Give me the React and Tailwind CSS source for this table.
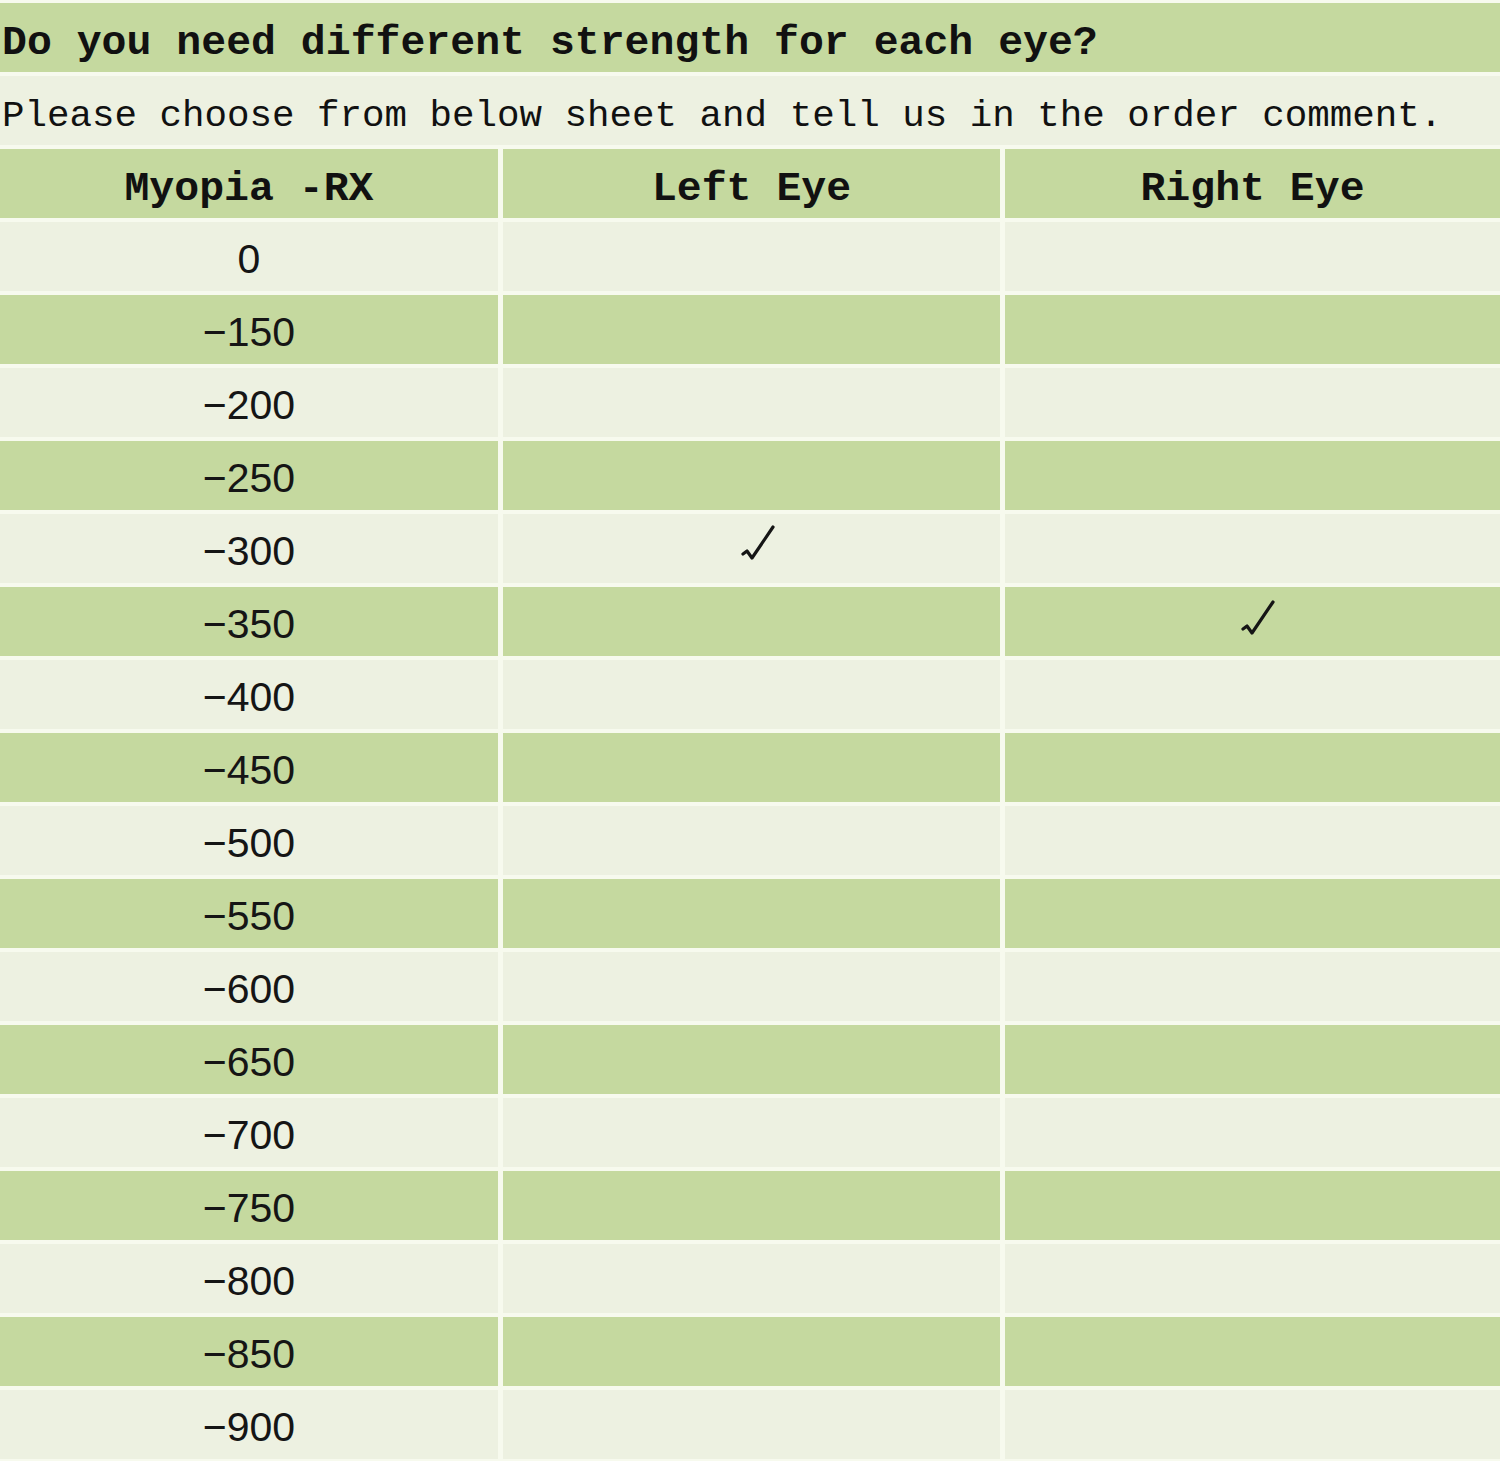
import React from 'react';

const rows = ['0', '−150', '−200', '−250', '−300', '−350', '−400', '−450', '−500', '−550', '−600', '−650', '−700', '−750', '−800', '−850', '−900'];

const GREEN = 'bg-[#c5d99f]';
const LIGHT = 'bg-[#edf1e1]';

const Check = () => (
  <svg width="36" height="40" viewBox="0 0 36 40" className="block">
    <path d="M3 31 L7 28 L12 35 L33 4" fill="none" stroke="#151515" strokeWidth="3.2" strokeLinejoin="round" strokeLinecap="round" />
  </svg>
);

const App = () => {
  return (
    <div className="w-[1500px] h-[1461px] bg-[#f7faee] pt-[3px] overflow-hidden">
      <div className="grid grid-cols-[498px_497px_495px] gap-x-[5px] gap-y-[4px] auto-rows-[69px]">
        <div className={`col-span-3 ${GREEN} flex items-center pl-[2px] pt-[10px]`}>
          <span className="font-['Liberation_Mono',monospace] font-bold text-[41.5px] text-[#111] leading-none">
            Do you need different strength for each eye?
          </span>
        </div>
        <div className={`col-span-3 ${LIGHT} flex items-center pl-[2px] pt-[13px]`}>
          <span className="font-['Liberation_Mono',monospace] text-[37.5px] text-[#111] leading-none">
            Please choose from below sheet and tell us in the order comment.
          </span>
        </div>

        {['Myopia -RX', 'Left Eye', 'Right Eye'].map((h) => (
          <div key={h} className={`${GREEN} flex items-center justify-center pt-[11px]`}>
            <span className="font-['Liberation_Mono',monospace] font-bold text-[41.5px] text-[#111] leading-none">{h}</span>
          </div>
        ))}

        {rows.map((r, i) => {
          const bg = i % 2 === 0 ? LIGHT : GREEN;
          return (
            <React.Fragment key={r}>
              <div className={`${bg} flex items-center justify-center pt-[6px]`}>
                <span className="font-['Liberation_Sans',Arial,sans-serif] text-[41px] text-[#151515] leading-none">{r}</span>
              </div>
              <div className={`${bg} flex items-center justify-center`}>
                {r === '−300' && (
                  <div className="ml-[12px] mb-[12px]">
                    <Check />
                  </div>
                )}
              </div>
              <div className={`${bg} flex items-center justify-center`}>
                {r === '−350' && (
                  <div className="ml-[10px] mb-[8px]">
                    <Check />
                  </div>
                )}
              </div>
            </React.Fragment>
          );
        })}
      </div>
    </div>
  );
};

export default App;
